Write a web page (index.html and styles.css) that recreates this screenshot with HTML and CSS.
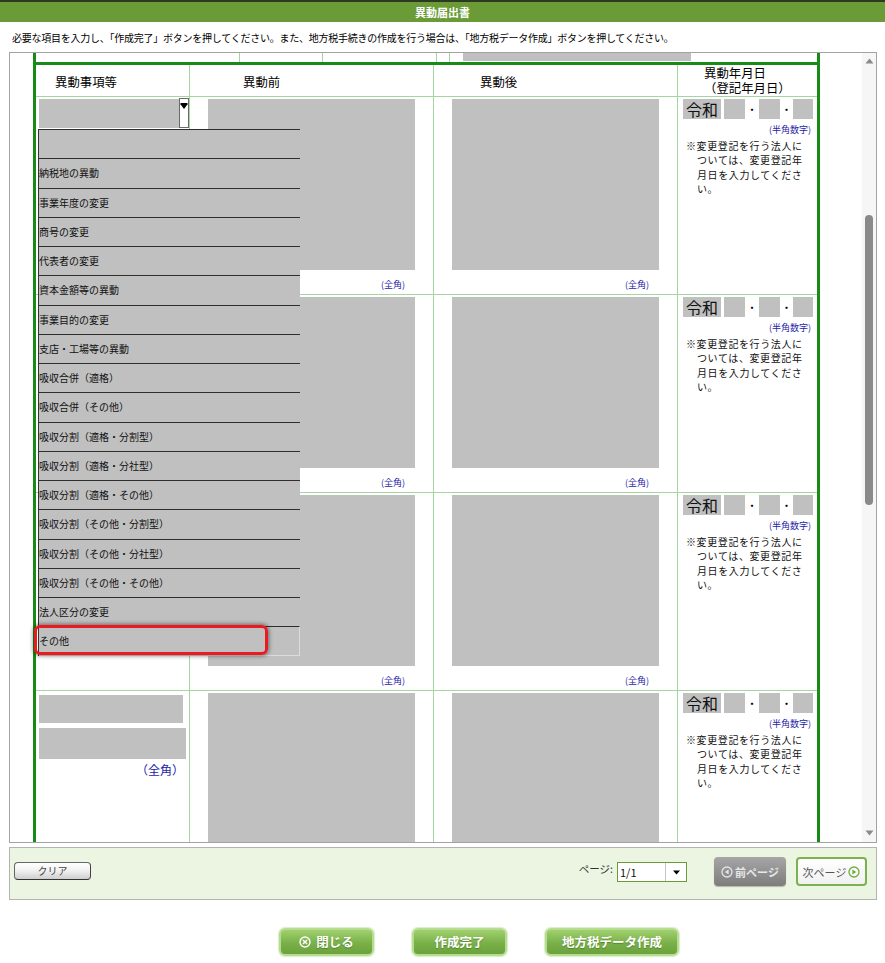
FILE: index.html
```html
<!DOCTYPE html>
<html lang="ja">
<head>
<meta charset="utf-8">
<title>異動届出書</title>
<link rel="stylesheet" href="styles.css">
</head>
<body>
<header class="titlebar">異動届出書</header>
<p class="lead">必要な項目を入力し、「作成完了」ボタンを押してください。また、地方税手続きの作成を行う場合は、「地方税データ作成」ボタンを押してください。</p>

<div class="scrollbox">
  <div class="viewport">
    <!-- tail of the section above, scrolled mostly out of view -->
    <div class="prev-strip">
      <span class="seg s1"></span><span class="seg s2"></span><span class="seg s3"></span><span class="seg s4"></span><span class="seg s5"><i class="seg-fill"></i></span>
    </div>

    <div class="sheet">
      <div class="hd h1">異動事項等</div>
      <div class="hd h2">異動前</div>
      <div class="hd h3">異動後</div>
      <div class="hd h4">異動年月日<br>（登記年月日）</div>

      <!-- row 1 -->
      <div class="cell c1 open">
        <div class="pick"><span class="pick-field"></span><span class="pick-btn"><svg width="8" height="8" viewBox="0 0 8 8"><path d="M0.5 1h7v1.2L4 7 0.5 2.2z" fill="#000"/></svg></span></div>
        <ul class="options">
          <li></li>
          <li>納税地の異動</li>
          <li>事業年度の変更</li>
          <li>商号の変更</li>
          <li>代表者の変更</li>
          <li>資本金額等の異動</li>
          <li>事業目的の変更</li>
          <li>支店・工場等の異動</li>
          <li>吸収合併（適格）</li>
          <li>吸収合併（その他）</li>
          <li>吸収分割（適格・分割型）</li>
          <li>吸収分割（適格・分社型）</li>
          <li>吸収分割（適格・その他）</li>
          <li>吸収分割（その他・分割型）</li>
          <li>吸収分割（その他・分社型）</li>
          <li>吸収分割（その他・その他）</li>
          <li>法人区分の変更</li>
          <li class="last">その他<span class="mark"></span></li>
        </ul>
      </div>
      <div class="cell c23"><div class="area"></div><div class="zen">(全角)</div></div>
      <div class="cell c23"><div class="area"></div><div class="zen">(全角)</div></div>
      <div class="cell c4">
        <div class="era"><span class="gengo">令和</span><span class="num n1"></span><span class="dot d1">・</span><span class="num n2"></span><span class="dot d2">・</span><span class="num n3"></span></div>
        <div class="han">(半角数字)</div>
        <p class="note">※変更登記を行う法人に<br>ついては、変更登記年<br>月日を入力してくださ<br>い。</p>
      </div>

      <!-- row 2 -->
      <div class="cell c1">
        <div class="pick"><span class="pick-field"></span><span class="pick-btn"><svg width="8" height="8" viewBox="0 0 8 8"><path d="M0.5 1h7v1.2L4 7 0.5 2.2z" fill="#000"/></svg></span></div>
      </div>
      <div class="cell c23"><div class="area"></div><div class="zen">(全角)</div></div>
      <div class="cell c23"><div class="area"></div><div class="zen">(全角)</div></div>
      <div class="cell c4">
        <div class="era"><span class="gengo">令和</span><span class="num n1"></span><span class="dot d1">・</span><span class="num n2"></span><span class="dot d2">・</span><span class="num n3"></span></div>
        <div class="han">(半角数字)</div>
        <p class="note">※変更登記を行う法人に<br>ついては、変更登記年<br>月日を入力してくださ<br>い。</p>
      </div>

      <!-- row 3 -->
      <div class="cell c1">
        <div class="pick"><span class="pick-field"></span><span class="pick-btn"><svg width="8" height="8" viewBox="0 0 8 8"><path d="M0.5 1h7v1.2L4 7 0.5 2.2z" fill="#000"/></svg></span></div>
      </div>
      <div class="cell c23"><div class="area"></div><div class="zen">(全角)</div></div>
      <div class="cell c23"><div class="area"></div><div class="zen">(全角)</div></div>
      <div class="cell c4">
        <div class="era"><span class="gengo">令和</span><span class="num n1"></span><span class="dot d1">・</span><span class="num n2"></span><span class="dot d2">・</span><span class="num n3"></span></div>
        <div class="han">(半角数字)</div>
        <p class="note">※変更登記を行う法人に<br>ついては、変更登記年<br>月日を入力してくださ<br>い。</p>
      </div>

      <!-- row 4 (continues below the fold) -->
      <div class="cell c1">
        <div class="fld f1"></div>
        <div class="fld f2"></div>
        <div class="zen-l">（全角）</div>
      </div>
      <div class="cell c23"><div class="area"></div></div>
      <div class="cell c23"><div class="area"></div></div>
      <div class="cell c4">
        <div class="era"><span class="gengo">令和</span><span class="num n1"></span><span class="dot d1">・</span><span class="num n2"></span><span class="dot d2">・</span><span class="num n3"></span></div>
        <div class="han">(半角数字)</div>
        <p class="note">※変更登記を行う法人に<br>ついては、変更登記年<br>月日を入力してくださ<br>い。</p>
      </div>
    </div>
  </div>

  <div class="vscroll">
    <div class="vs-arrow"><svg width="9" height="6" viewBox="0 0 9 6"><path d="M4.5 0.5L8.5 5.5H0.5z" fill="#8a8a8a"/></svg></div>
    <div class="vs-thumb"></div>
    <div class="vs-space"></div>
    <div class="vs-arrow down"><svg width="9" height="6" viewBox="0 0 9 6"><path d="M0.5 0.5H8.5L4.5 5.5z" fill="#8a8a8a"/></svg></div>
  </div>
</div>

<div class="pager">
  <button class="btn-clear" type="button">クリア</button>
  <div class="pager-right">
    <span class="page-label">ページ:</span>
    <div class="page-select">
      <span class="page-val">1/1</span>
      <span class="page-arrow"><svg width="7" height="5" viewBox="0 0 7 5"><path d="M0 0.5H7L3.5 4.5z" fill="#000"/></svg></span>
    </div>
    <button class="btn-prev" type="button" disabled><svg width="12" height="12" viewBox="0 0 12 12"><circle cx="6" cy="6" r="5" fill="none" stroke="#e4e4e4" stroke-width="1.3"/><path d="M7.6 3.6v4.8L3.8 6z" fill="#e4e4e4"/></svg>前ページ</button>
    <button class="btn-next" type="button">次ページ<svg width="12" height="12" viewBox="0 0 12 12"><circle cx="6" cy="6" r="5" fill="none" stroke="#6fae3c" stroke-width="1.3"/><path d="M4.4 3.6v4.8L8.2 6z" fill="#6fae3c"/></svg></button>
  </div>
</div>

<div class="actions">
  <button class="act w-close" type="button"><svg width="12" height="12" viewBox="0 0 12 12"><circle cx="6" cy="6" r="5" fill="none" stroke="#fff" stroke-width="1.4"/><path d="M3.9 3.9l4.2 4.2M8.1 3.9l-4.2 4.2" stroke="#fff" stroke-width="1.4"/></svg>閉じる</button>
  <button class="act w-done" type="button">作成完了</button>
  <button class="act w-local" type="button">地方税データ作成</button>
</div>
</body>
</html>
```

FILE: styles.css
```css
* { box-sizing: border-box; }

html, body { margin: 0; padding: 0; }

body {
  width: 885px;
  height: 963px;
  overflow: hidden;
  background: #fff;
  color: #000;
  font-family: "Noto Sans CJK JP", "Noto Sans", sans-serif;
}

/* ---- title + lead ---- */
.titlebar {
  height: 22px;
  border-top: 2px solid #2b3a20;
  background: #6a9b37;
  color: #fff;
  font-size: 11px;
  font-weight: bold;
  line-height: 20px;
  text-align: center;
}

.lead {
  margin: 0;
  height: 30px;
  padding: 9px 0 0 12px;
  font-size: 10px;
  letter-spacing: -0.25px;
  line-height: 14px;
  white-space: nowrap;
}

/* ---- scrolling form area ---- */
.scrollbox {
  margin: 0 9px;
  width: 868px;
  height: 791px;
  border: 1px solid #a3a3a3;
  display: flex;
  overflow: hidden;
}

.viewport {
  flex: 1;
  overflow: hidden;
}

.prev-strip {
  margin-left: 23px;
  width: 787px;
  height: 9px;
  border-left: 3px solid #178a17;
  border-right: 3px solid #178a17;
  display: flex;
  gap: 1px;
  background: #a3d6a0;
}

.seg { background: #fff; }
.s1 { width: 203px; }
.s2 { width: 82px; }
.s3 { width: 113px; }
.s4 { width: 12px; }
.s5 { flex: 1; display: flex; }
.seg-fill {
  margin-left: 13px;
  width: 228px;
  height: 8px;
  background: #c0c0c0;
}

.sheet {
  margin-left: 23px;
  width: 787px;
  border-top: 3px solid #178a17;
  border-left: 3px solid #178a17;
  border-right: 3px solid #178a17;
  display: grid;
  grid-template-columns: 153px 243px 243px 139px;
  grid-template-rows: 31px repeat(4, 197px);
  gap: 1px;
  background: #a3d6a0;
}

.hd {
  background: #fff;
  font-size: 12.4px;
  line-height: 15px;
  padding-top: 10px;
  white-space: nowrap;
}
.h1 { padding-left: 19px; }
.h2 { padding-left: 53px; }
.h3 { padding-left: 46px; }
.h4 { padding-left: 26px; padding-top: 1px; line-height: 15px; }

.cell {
  background: #fff;
  padding-top: 2px;
}

/* column 1: change item picker */
.c1 { padding-left: 3px; }
.c1.open { position: relative; }

.pick { display: flex; }
.pick-field {
  width: 144px;
  height: 29px;
  background: #c0c0c0;
}
.pick-btn {
  width: 10px;
  height: 30px;
  margin-top: -1px;
  border: 1px solid #6a6a6a;
  background: #fff;
  display: flex;
  justify-content: center;
  padding-top: 3px;
}

.options {
  position: absolute;
  left: 2px;
  top: 32px;
  width: 262px;
  margin: 0;
  padding: 0;
  list-style: none;
  background: #c0c0c0;
  border-left: 1px solid #333;
}
.options li {
  position: relative;
  height: 29.25px;
  border-top: 1px solid #2e2e2e;
  font-size: 10px;
  line-height: 12px;
  display: flex;
  align-items: center;
  white-space: nowrap;
  color: #111;
}
.options li.last {
  border-right: 1px solid #dcdcdc;
  border-bottom: 1px solid #dcdcdc;
}
.mark {
  position: absolute;
  left: -5px;
  top: -2px;
  width: 234px;
  height: 30px;
  border: 3px solid #ea1b1f;
  border-radius: 6px;
  box-shadow: 0 0 4px 1px rgba(0, 0, 0, 0.45);
}

.fld { background: #c0c0c0; }
.f1 { width: 144px; height: 28px; margin-top: 2px; }
.f2 { width: 147px; height: 31px; margin-top: 5px; }
.zen-l {
  margin-top: 3px;
  padding-right: 5px;
  text-align: right;
  font-size: 12px;
  line-height: 16px;
  color: #1c22a8;
}

/* columns 2 and 3: before / after text areas */
.c23 { padding-left: 18px; }
.area {
  width: 207px;
  height: 171px;
  background: #c0c0c0;
}
.zen {
  margin-top: 9px;
  width: 207px;
  text-align: right;
  padding-right: 10px;
  font-size: 9px;
  line-height: 11px;
  color: #1c22a8;
}

/* column 4: date of change */
.c4 { padding-left: 5px; }
.era {
  display: flex;
  height: 20px;
}
.gengo {
  width: 38px;
  height: 20px;
  background: #c0c0c0;
  font-size: 16px;
  line-height: 20px;
  text-align: center;
  color: #111;
}
.num {
  height: 20px;
  background: #c0c0c0;
}
.n1 { width: 21px; margin-left: 3px; }
.n2 { width: 21px; }
.n3 { width: 20px; }
.dot {
  font-size: 11px;
  line-height: 20px;
  text-align: center;
}
.d1 { width: 14px; }
.d2 { width: 13px; }

.han {
  margin-top: 5px;
  padding-right: 6px;
  text-align: right;
  font-size: 9px;
  line-height: 12px;
  color: #1c22a8;
}

.note {
  margin: 3px 0 0;
  padding-left: 14px;
  text-indent: -11px;
  font-size: 10px;
  letter-spacing: 0.6px;
  line-height: 14.4px;
  white-space: nowrap;
  color: #111;
}

/* custom vertical scrollbar */
.vscroll {
  width: 14px;
  background: #f6f6f6;
  display: flex;
  flex-direction: column;
  align-items: center;
}
.vs-arrow {
  height: 17px;
  display: flex;
  justify-content: center;
  align-items: flex-start;
  padding-top: 5px;
}
.vs-arrow.down {
  align-items: flex-end;
  padding: 0 0 6px;
}
.vs-thumb {
  margin-top: 145px;
  width: 8px;
  height: 290px;
  border-radius: 4px;
  background: #8a8a8a;
}
.vs-space { flex: 1; }

/* ---- pager bar ---- */
.pager {
  margin: 4px 9px 0;
  width: 868px;
  height: 53px;
  border: 1px solid #b3b3b3;
  background: #ebf5e1;
  display: flex;
  align-items: flex-start;
  padding: 0 9px 0 4px;
}

.btn-clear {
  margin-top: 14px;
  width: 77px;
  height: 18px;
  padding: 0;
  border: 1px solid #666;
  border-bottom-color: #333;
  border-right-color: #444;
  border-radius: 4px;
  background: linear-gradient(#ffffff, #f2f2f2 45%, #cfcfcf);
  font-family: inherit;
  font-size: 10px;
  line-height: 14px;
  color: #444;
}

.pager-right {
  margin-left: auto;
  display: flex;
  align-items: flex-start;
}

.page-label {
  margin-top: 14px;
  margin-right: 4px;
  font-size: 10.5px;
  line-height: 14px;
  color: #333;
}

.page-select {
  margin-top: 14px;
  width: 70px;
  height: 20px;
  border: 1px solid #6b9a3c;
  background: #fff;
  display: flex;
}
.page-val {
  padding-left: 2px;
  font-size: 11px;
  line-height: 18px;
  color: #111;
}
.page-arrow {
  margin-left: auto;
  width: 21px;
  border-left: 1px solid #c4c4c4;
  display: flex;
  align-items: center;
  justify-content: center;
}

.btn-prev,
.btn-next {
  margin-top: 9px;
  height: 29px;
  padding: 0;
  border-radius: 4px;
  display: flex;
  align-items: center;
  justify-content: center;
  gap: 2px;
  font-family: inherit;
  font-size: 11px;
  line-height: 14px;
}
.btn-prev {
  margin-left: 27px;
  width: 72px;
  border: none;
  background: linear-gradient(#a6a6a6, #7d7d7d);
  box-shadow: 0 1px 1px rgba(0, 0, 0, 0.25);
  color: #e8e8e8;
  font-weight: bold;
}
.btn-next {
  margin-left: 10px;
  width: 71px;
  border: 2px solid #7cb150;
  background: linear-gradient(#ffffff, #f1f1f1);
  color: #555;
}

/* ---- bottom action buttons ---- */
.actions {
  display: flex;
  gap: 38px;
  padding-left: 279px;
  margin-top: 28px;
}

.act {
  height: 28px;
  padding: 0;
  border: 2px solid #b6dc8f;
  border-radius: 6px;
  background: linear-gradient(#a0d06e, #79b048 55%, #6ba23c);
  box-shadow: 0 0 1px 1px rgba(150, 200, 110, 0.35);
  color: #fff;
  font-family: inherit;
  font-size: 12.5px;
  font-weight: bold;
  line-height: 24px;
  text-shadow: 0 1px 1px rgba(40, 80, 10, 0.45);
  display: flex;
  align-items: center;
  justify-content: center;
  gap: 5px;
}
.w-close { width: 95px; }
.w-done { width: 95px; }
.w-local { width: 134px; }
```
